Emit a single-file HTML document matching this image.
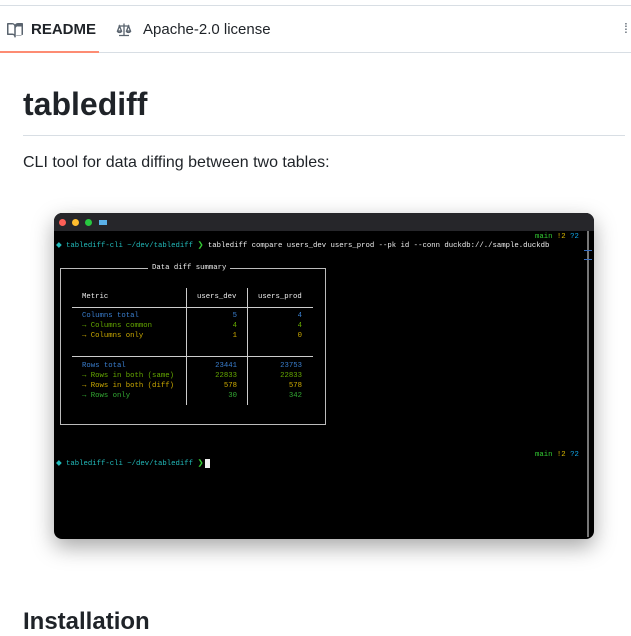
<!DOCTYPE html>
<html><head><style>
body{margin:0;width:631px;height:632px;overflow:hidden;background:#fff;font-family:"Liberation Sans",sans-serif;position:relative;color:#1f2328}
.a{position:absolute;white-space:pre}
.m{font-family:"Liberation Mono",monospace;font-size:7.3px;line-height:10px}
.hl{position:absolute;background:#ccc;height:1px}
.vl{position:absolute;background:#ccc;width:1px}
</style></head><body>
<div style="position:absolute;left:0;top:5px;width:631px;height:1px;background:#d8dee4"></div>
<div style="position:absolute;left:0;top:52px;width:631px;height:1px;background:#d8dee4"></div>
<div style="position:absolute;left:0;top:51px;width:99px;height:2px;background:#fd8c73"></div>
<svg class="a" style="left:7px;top:22px" width="16" height="16" viewBox="0 0 16 16"><path fill="#59636e" d="M0 1.75A.75.75 0 0 1 .75 1h4.25c1.2 0 2.3.6 3 1.5.7-.9 1.8-1.5 3-1.5h4.25a.75.75 0 0 1 .75.75v10.5a.75.75 0 0 1-.75.75h-4.7a1.8 1.8 0 0 0-1.8 1.8.75.75 0 0 1-1.5 0 1.8 1.8 0 0 0-1.8-1.8H.75A.75.75 0 0 1 0 12.25Zm7.25 2.5A1.8 1.8 0 0 0 5 2.5H1.5v9h3.7c.8 0 1.5.2 2.05.6Zm1.5 9.850c.55-.4 1.25-.6 2.05-.6h3.7v-9H11a1.8 1.8 0 0 0-2.250 1.75Z"/></svg>
<div class="a" style="left:31px;top:21px;font-size:15px;font-weight:bold">README</div>
<svg class="a" style="left:116px;top:22px" width="16" height="16" viewBox="0 0 16 16"><path fill="none" stroke="#59636e" stroke-width="1.3" d="M8 1.5v12M3 13.5h10M2.5 4h11M3.5 4 1.5 9h4zM12.5 4l-2 5h4zM1.5 9a2 1.5 0 0 0 4 0M10.5 9a2 1.5 0 0 0 4 0"/></svg>
<div class="a" style="left:143px;top:21px;font-size:15px">Apache-2.0 license</div>
<div class="a" style="left:624px;top:20px;font-size:14px;color:#59636e">⁞</div>
<div class="a" style="left:23px;top:86px;font-size:32px;font-weight:bold">tablediff</div>
<div style="position:absolute;left:23px;top:135px;width:602px;height:1px;background:#d8dee4"></div>
<div class="a" style="left:23px;top:154px;font-size:16px">CLI tool for data diffing between two tables:</div>
<div class="a" style="left:23px;top:608px;font-size:24px;font-weight:bold">Installation</div>

<div style="position:absolute;left:54px;top:213px;width:540px;height:326px;border-radius:8px;background:#000;box-shadow:0 8px 22px rgba(0,0,0,.35);overflow:hidden">
 <div style="position:absolute;left:0;top:0;width:540px;height:18px;background:#26262a"></div>
 <div style="position:absolute;left:5px;top:6px;width:7px;height:7px;border-radius:50%;background:#fe5f57"></div>
 <div style="position:absolute;left:18px;top:6px;width:7px;height:7px;border-radius:50%;background:#febc2e"></div>
 <div style="position:absolute;left:31px;top:6px;width:7px;height:7px;border-radius:50%;background:#28c840"></div>
 <div style="position:absolute;left:45px;top:7px;width:8px;height:5px;background:#5ab0e8"></div>
 <div style="position:absolute;left:533px;top:18px;width:2px;height:306px;background:#777"></div>
 <div style="position:absolute;left:530px;top:37px;width:8px;height:1px;background:#3a6fbf"></div>
 <div style="position:absolute;left:530px;top:46px;width:8px;height:1px;background:#3a6fbf"></div>
</div>
<div class="a m" style="left:535px;top:232px"><span style="color:#3c3">main</span> <span style="color:#db0">!2</span> <span style="color:#1ae">?2</span></div>
<div class="a m" style="left:56px;top:241px;color:#eee"><span style="color:#2bb">◆ tablediff-cli ~/dev/tablediff</span> <span style="color:#3c3">❯</span> tablediff compare users_dev users_prod --pk id --conn duckdb://./sample.duckdb</div>
<div style="position:absolute;left:60px;top:268px;width:266px;height:157px;border:1px solid #bbb;box-sizing:border-box"></div>
<div class="a m" style="left:148px;top:263px;color:#eee;background:#000;padding:0 4px">Data diff summary</div>
<div class="hl" style="left:72px;top:307px;width:241px"></div>
<div class="hl" style="left:72px;top:356px;width:241px"></div>
<div class="vl" style="left:186px;top:288px;height:117px"></div>
<div class="vl" style="left:247px;top:288px;height:117px"></div>
<div class="a m" style="left:82px;top:292px;color:#eee">Metric</div>
<div class="a m" style="left:197px;top:292px;color:#eee">users_dev</div>
<div class="a m" style="left:258px;top:292px;color:#eee">users_prod</div>
<div class="a m" style="left:82px;top:311px;color:#3a7fd0">Columns total</div>
<div class="a m" style="left:82px;top:321px;color:#6a0">→ Columns common</div>
<div class="a m" style="left:82px;top:331px;color:#ca0">→ Columns only</div>
<div class="a m" style="left:82px;top:361px;color:#3a7fd0">Rows total</div>
<div class="a m" style="left:82px;top:371px;color:#6a0">→ Rows in both (same)</div>
<div class="a m" style="left:82px;top:381px;color:#ca0">→ Rows in both (diff)</div>
<div class="a m" style="left:82px;top:391px;color:#3a3">→ Rows only</div>
<div class="a m" style="left:186px;width:51px;text-align:right;top:311px"><span style="color:#3a7fd0">5</span>
<span style="color:#6a0">4</span>
<span style="color:#ca0">1</span>


<span style="color:#3a7fd0">23441</span>
<span style="color:#6a0">22833</span>
<span style="color:#ca0">578</span>
<span style="color:#3a3">30</span></div>
<div class="a m" style="left:247px;width:55px;text-align:right;top:311px"><span style="color:#3a7fd0">4</span>
<span style="color:#6a0">4</span>
<span style="color:#ca0">0</span>


<span style="color:#3a7fd0">23753</span>
<span style="color:#6a0">22833</span>
<span style="color:#ca0">578</span>
<span style="color:#3a3">342</span></div>
<div class="a m" style="left:535px;top:450px"><span style="color:#3c3">main</span> <span style="color:#db0">!2</span> <span style="color:#1ae">?2</span></div>
<div class="a m" style="left:56px;top:459px"><span style="color:#2bb">◆ tablediff-cli ~/dev/tablediff</span> <span style="color:#3c3">❯</span></div>
<div style="position:absolute;left:205px;top:459px;width:5px;height:9px;background:#eee"></div>
</body></html>
